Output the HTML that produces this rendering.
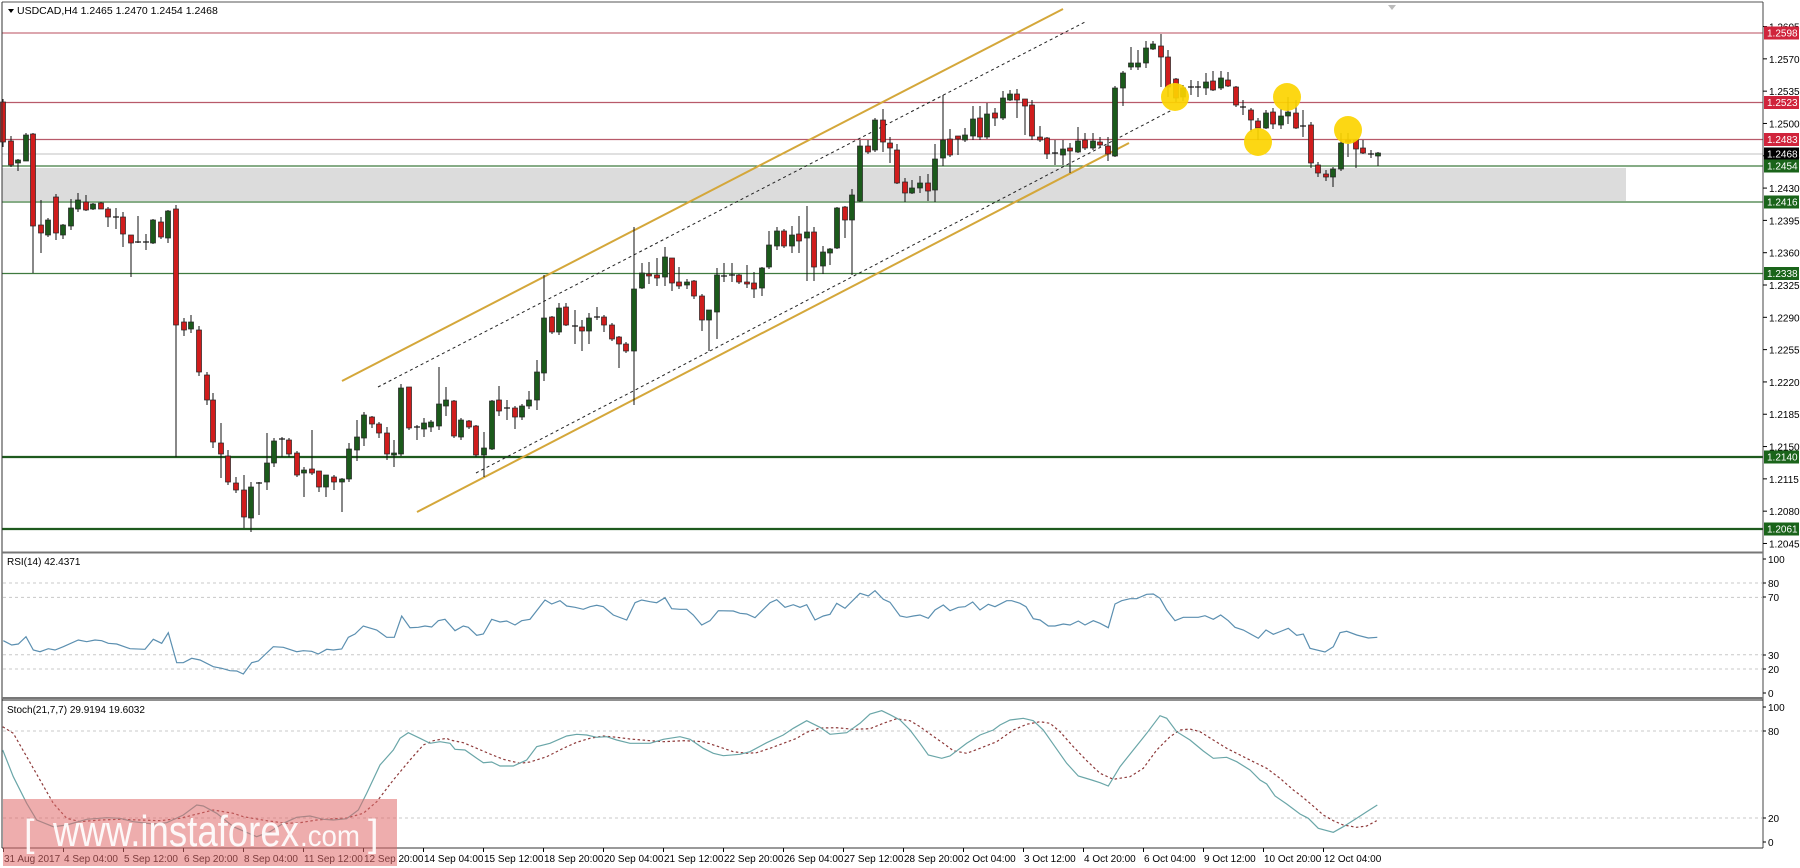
<!DOCTYPE html>
<html><head><meta charset="utf-8"><style>
html,body{margin:0;padding:0;background:#fff;width:1800px;height:868px;overflow:hidden}
svg{display:block}
text{font-family:"Liberation Sans",sans-serif;font-size:10px;fill:#000}
</style></head><body>
<svg id="s" width="1800" height="868" viewBox="0 0 1800 868" xmlns="http://www.w3.org/2000/svg"></svg>
<script>
var S=[];
function Y(p){return 33+(1.2598-p)*9231;}
S.push('<rect x="2" y="168" width="1624" height="33" fill="#dcdcdc"/>');
function hl(y,c,w){S.push('<line x1="2" x2="1763" y1="'+y+'" y2="'+y+'" stroke="'+c+'" stroke-width="'+w+'"/>');}
hl(33,'#c8707e',1.2);hl(102.5,'#b85a6a',1.2);hl(139.5,'#b85a6a',1.2);hl(154,'#c0c0c0',1);
hl(166,'#3f7a3f',1.2);hl(202,'#3f7a3f',1.2);hl(273.5,'#3f7a3f',1.2);hl(457,'#1e5a1e',2.2);hl(529,'#1e5a1e',2.2);
function ln(x1,y1,x2,y2,c,w,d){S.push('<line x1="'+x1+'" y1="'+y1+'" x2="'+x2+'" y2="'+y2+'" stroke="'+c+'" stroke-width="'+w+'"'+(d?' stroke-dasharray="'+d+'"':'')+'/>');}
ln(342,381,1063,9,'#d4a73a',2);
ln(417,512,1129,143,'#d4a73a',2);
ln(378,387,1085,22,'#222',1,'3,3');
ln(476,473,1172,110,'#222',1,'3,3');
var C=[[3,102,142,99,147,'r'],[11,141,165,136,167,'r'],[18,160,163,159,171,'g'],[26,135,161,133,161,'g'],[33,134,226,133,273,'r'],[41,225,233,200,253,'r'],[48,220,235,218,237,'g'],[56,197,233,194,240,'r'],[63,225,235,224,239,'g'],[71,208,226,199,230,'g'],[78,200,209,193,212,'g'],[86,202,210,195,211,'r'],[93,204,209,203,210,'g'],[101,203,209,202,209,'r'],[108,209,217,207,227,'r'],[116,217,217,208,229,'d'],[123,217,234,212,247,'r'],[131,235,243,235,277,'r'],[138,242,242,216,243,'d'],[146,242,242,234,250,'d'],[153,220,243,219,244,'g'],[161,222,237,217,239,'r'],[168,211,238,210,243,'g'],[176,209,325,205,457,'r'],
[184,322,330,318,336,'r'],[191,322,329,315,333,'g'],[199,330,372,326,376,'r'],[207,375,400,372,405,'r'],[213,400,442,393,448,'r'],[221,443,454,423,478,'r'],[228,456,482,450,485,'r'],[236,483,490,477,493,'r'],[244,490,517,475,528,'r'],[251,487,518,482,532,'g'],[259,483,483,482,515,'d'],[267,463,482,433,490,'g'],[274,441,463,438,467,'g'],[282,439,439,437,457,'d'],[289,440,454,438,457,'r'],[297,453,475,451,477,'r'],[304,470,473,467,497,'g'],[312,469,473,430,475,'r'],[319,471,487,471,492,'r'],[326,475,487,475,497,'g'],[334,477,482,475,490,'r'],[342,479,482,478,512,'g'],[349,449,479,443,482,'g'],[357,437,450,420,461,'g'],[364,415,438,412,446,'g'],[372,417,424,416,428,'r'],[379,424,433,422,438,'r'],[387,433,454,427,460,'r'],[394,453,455,440,467,'g'],[401,388,454,384,456,'g'],[409,387,428,387,430,'r'],[417,427,427,425,440,'d'],[424,423,429,418,437,'g'],[431,422,427,420,432,'g'],[439,404,426,367,430,'g'],[446,400,406,387,416,'g'],[454,401,436,400,438,'r'],[461,420,437,418,440,'g'],[469,421,427,420,429,'r'],[476,426,455,425,457,'r'],[484,448,455,432,477,'g'],[492,401,449,400,450,'g'],[499,400,411,386,416,'r'],[507,408,408,400,420,'d'],[515,408,417,406,429,'r'],[522,406,417,404,420,'g'],[529,400,406,391,409,'g'],[537,372,400,360,410,'g'],[544,318,373,275,381,'g'],[552,317,332,316,334,'r'],[559,308,332,303,335,'g'],[566,307,325,303,326,'r'],[575,326,326,310,344,'d'],[582,327,331,320,351,'r'],[589,318,331,313,344,'g'],[597,317,317,307,320,'d'],[604,317,325,315,332,'r'],[612,325,339,323,341,'r'],[619,337,344,336,368,'r'],[626,344,351,342,353,'r'],[634,289,351,227,405,'g'],[642,273,288,263,289,'g'],[649,274,276,262,284,'r'],[657,275,278,258,286,'r'],[665,257,277,247,286,'g'],[672,258,283,258,291,'r'],[679,282,286,267,289,'r'],[687,282,285,279,289,'g'],[694,281,296,280,299,'r'],[702,296,320,294,331,'r'],[709,310,320,310,351,'g'],[717,275,312,268,339,'g'],[724,276,276,263,282,'d'],[732,275,275,263,282,'d'],[739,275,282,274,284,'r'],[747,282,284,265,288,'r'],[754,283,289,272,298,'r'],[762,268,288,267,296,'g'],[769,245,267,231,269,'g'],[777,231,246,227,250,'g'],[784,231,246,229,248,'r'],[792,235,246,226,253,'g'],[799,234,241,216,253,'r'],[807,232,238,206,281,'g'],[814,232,267,227,281,'r'],[823,252,266,246,274,'g'],[830,249,253,248,265,'g'],[837,208,248,207,249,'g'],[845,207,220,206,238,'r'],[852,195,220,189,275,'g'],[860,146,201,140,202,'g'],[868,146,152,140,154,'r'],[875,120,150,118,152,'g'],[883,120,142,109,152,'r'],
[890,143,148,137,163,'r'],[897,150,183,144,184,'r'],[905,182,193,178,202,'r'],[912,188,193,180,194,'g'],[920,183,188,176,193,'g'],[928,183,191,174,201,'r'],[935,159,190,144,202,'g'],[943,140,158,95,166,'g'],[950,139,155,129,157,'r'],[958,136,139,136,155,'r'],[965,135,140,128,142,'g'],[973,119,136,106,140,'g'],[980,118,137,106,140,'r'],[987,114,137,103,139,'g'],[995,113,118,108,126,'r'],[1003,98,118,91,120,'g'],[1010,94,100,90,101,'g'],[1017,94,100,89,118,'r'],[1025,99,106,99,135,'r'],[1032,105,136,100,140,'r'],[1040,137,140,126,142,'r'],[1047,138,154,137,159,'r'],[1055,153,153,140,165,'d'],[1063,149,155,140,165,'g'],[1070,148,151,143,173,'r'],[1078,141,152,127,153,'g'],[1085,140,148,133,150,'r'],[1093,141,148,133,150,'g'],[1100,142,145,137,147,'r'],[1108,146,154,137,161,'r'],[1115,88,156,86,157,'g'],[1123,73,88,71,106,'g'],[1131,63,67,47,70,'g'],[1138,63,67,50,70,'g'],[1146,48,63,41,68,'g'],[1153,44,49,41,50,'g'],[1161,46,57,34,87,'r'],[1168,57,87,50,97,'r'],[1176,79,98,78,102,'r'],[1183,88,97,85,101,'g'],[1191,87,87,80,95,'d'],[1198,87,87,81,97,'d'],[1206,82,88,73,95,'g'],[1213,81,90,71,91,'r'],[1221,78,88,71,90,'g'],[1228,80,86,72,87,'r'],[1236,87,105,86,107,'r'],[1243,107,107,100,115,'d'],[1251,110,120,108,132,'r'],[1258,121,128,118,140,'r'],[1266,113,128,110,129,'g'],[1273,112,124,108,129,'r'],[1281,116,125,109,129,'g'],[1288,112,116,97,124,'g'],[1296,113,128,100,129,'r'],[1303,126,126,110,137,'d'],[1311,125,163,122,168,'r'],[1318,165,173,162,177,'r'],[1326,174,177,170,181,'r'],[1333,169,177,167,187,'g'],[1341,143,169,133,171,'g'],[1348,140,142,133,157,'r'],[1356,140,149,139,168,'r'],[1363,148,153,140,154,'r'],[1371,154,154,150,158,'d'],[1378,153,156,152,166,'g']];
C.forEach(function(c){
 var x=c[0];
 S.push('<line x1="'+x+'" x2="'+x+'" y1="'+c[3]+'" y2="'+c[4]+'" stroke="#111" stroke-width="1"/>');
 if(c[5]=='d'){S.push('<line x1="'+(x-3)+'" x2="'+(x+3)+'" y1="'+c[1]+'" y2="'+c[1]+'" stroke="#111" stroke-width="1.2"/>');}
 else{var h=Math.max(c[2]-c[1],2);S.push('<rect x="'+(x-2.5)+'" y="'+c[1]+'" width="5" height="'+h+'" fill="'+(c[5]=='r'?'#d01c1c':'#1b5a1b')+'" stroke="#222" stroke-width="0.7"/>');}
});
[[1175,97],[1287,97],[1258,142],[1348,130]].forEach(function(p){S.push('<circle cx="'+p[0]+'" cy="'+p[1]+'" r="14" fill="#fcd400" opacity="0.92"/>');});
S.push('<line x1="2" y1="2" x2="1763" y2="2" stroke="#555" stroke-width="1"/>');
S.push('<line x1="2" y1="2" x2="2" y2="848" stroke="#333" stroke-width="1"/>');
S.push('<line x1="1763" y1="2" x2="1763" y2="848" stroke="#444" stroke-width="1"/>');
S.push('<rect x="2" y="551.5" width="1761" height="2" fill="#777"/>');
S.push('<rect x="2" y="697" width="1761" height="2" fill="#777"/>');
S.push('<line x1="2" y1="700" x2="1763" y2="700" stroke="#222" stroke-width="1"/>');
S.push('<line x1="2" y1="848" x2="1763" y2="848" stroke="#333" stroke-width="1"/>');
S.push('<polygon points="1388,5 1396,5 1392,10" fill="#bbb"/>');
S.push('<polygon points="8,9 14,9 11,13" fill="#000"/>');
S.push('<text x="17" y="14" style="font-size:10.5px">USDCAD,H4  1.2465 1.2470 1.2454 1.2468</text>');
for(var i=0;i<17;i++){var p=1.2605-0.0035*i;var y=Y(p);S.push('<line x1="1763" x2="1767" y1="'+y+'" y2="'+y+'" stroke="#000"/>');S.push('<text x="1769" y="'+(y+4)+'">'+p.toFixed(4)+'</text>');}
function tag(y,t,bg){S.push('<rect x="1764" y="'+(y-6.5)+'" width="35" height="13" fill="'+bg+'"/><text x="1767" y="'+(y+3.5)+'" style="fill:#fff">'+t+'</text>');}
tag(33,'1.2598','#d0243c');tag(102.5,'1.2523','#d0243c');tag(139.5,'1.2483','#d0243c');tag(154,'1.2468','#000');tag(166,'1.2454','#1a641a');tag(202,'1.2416','#1a641a');tag(273.5,'1.2338','#1a641a');tag(457,'1.2140','#1a641a');tag(529,'1.2061','#1a641a');
function ry(v){return 697.7-v*1.433;}
[80,70,30,20].forEach(function(v){var y=ry(v);S.push('<line x1="3" x2="1762" y1="'+y+'" y2="'+y+'" stroke="#c8c8c8" stroke-dasharray="3,3"/>');});
[[100,559],[80,583],[70,597],[30,655],[20,669],[0,693]].forEach(function(a){S.push('<line x1="1763" x2="1766" y1="'+a[1]+'" y2="'+a[1]+'" stroke="#000"/><text x="1768" y="'+(a[1]+4)+'">'+a[0]+'</text>');});
S.push('<text x="7" y="565">RSI(14) 42.4371</text>');
function sy(v){return 847-v*1.45;}
[80,20].forEach(function(v){var y=sy(v);S.push('<line x1="3" x2="1762" y1="'+y+'" y2="'+y+'" stroke="#c8c8c8" stroke-dasharray="3,3"/>');});
[[100,707],[80,731],[20,818],[0,842]].forEach(function(a){S.push('<line x1="1763" x2="1766" y1="'+a[1]+'" y2="'+a[1]+'" stroke="#000"/><text x="1768" y="'+(a[1]+4)+'">'+a[0]+'</text>');});
S.push('<text x="7" y="713">Stoch(21,7,7) 29.9194 19.6032</text>');
function pts(arrs){var o=[];arrs.forEach(function(g){var ox=g[0],oy=g[1],lim=g[3]||1e9;g[2].forEach(function(p){if(p[0]<lim)o.push((ox+p[0]/3).toFixed(1)+','+(oy+p[1]/3).toFixed(1));});});return o.join(' ');}
var rsi=pts([[0,550,[[10,272],[35,285],[55,282],[78,260],[100,300],[120,305],[145,296],[165,300],[190,290],[235,270],[260,275],[285,270],[305,272],[325,280],[350,282],[390,296],[435,298],[460,268],[485,280],[505,248],[530,338],[550,338],[575,325],[600,330],[640,350],[665,355],[690,362],[710,363],[730,372],[755,338],[775,333],[820,290],[850,292],[890,305],[910,302],[935,304],[955,312],[980,298],[1000,300],[1025,297],[1045,262],[1065,252],[1090,228],[1130,240],[1160,262],[1183,262],[1205,198],[1230,233],[1255,232],[1275,228],[1295,231],[1315,212],[1335,208]]],
[450,550,[[0,225],[15,242],[40,228],[55,232],[80,256],[100,252],[125,208],[150,216],[170,213],[195,225],[215,212],[240,208],[285,150],[305,162],[330,152],[350,168],[375,172],[400,178],[420,170],[440,166],[460,170],[490,195],[530,210],[555,158],[575,150],[600,155],[620,158],[645,143],[665,176],[690,178],[710,178],[730,195],[755,225],[780,212],[805,182],[850,183],[870,190],[890,192],[915,203],[960,158],[980,149],[1005,172],[1030,164],[1050,172],[1070,164],[1095,210],[1120,198],[1140,193],[1160,160],[1185,175],[1230,130],[1255,138],[1275,122],[1300,148],[1320,157]]],
[900,550,[[0,198],[20,202],[40,198],[60,195],[85,205],[105,180],[130,165],[150,182],[175,172],[195,170],[218,156],[240,180],[265,163],[285,170],[320,152],[335,152],[360,160],[378,170],[400,206],[420,210],[445,228],[465,228],[490,222],[510,225],[535,213],[555,225],[580,212],[600,220],[625,233],[645,162],[665,152],[690,146],[710,146],[740,133],[760,132],[780,145],[800,180],[825,212],[850,202],[895,202],[915,197],[940,208],[962,195],[985,212],[1005,232],[1030,240],[1075,265],[1098,240],[1120,253],[1145,243],[1165,235],[1190,256]],1200],
[1300,560,[[10,222],[30,265],[75,276],[100,260],[120,218],[140,214],[170,225],[205,234],[232,232]]]]);
S.push('<polyline points="'+rsi+'" fill="none" stroke="#5b8fb0" stroke-width="1.2"/>');
var st=pts([[0,550,[[8,600],[40,680],[80,760],[110,810],[160,830],[200,825],[260,808],[320,803],[360,805],[400,815],[460,822],[500,818],[550,795],[590,765],[610,768],[650,790],[700,830],[770,860],[810,845],[850,820],[890,802],[930,798],[970,808],[1000,810],[1040,806],[1075,780],[1100,730],[1140,645],[1180,600],[1200,565],[1225,548],[1260,565],[1290,580],[1320,575]]],
[450,550,[[0,580],[15,598],[45,600],[80,625],[100,638],[125,636],[150,648],[190,648],[230,630],[260,590],[300,580],[350,558],[380,553],[410,555],[440,562],[470,560],[500,570],[540,580],[600,580],[640,568],[690,560],[720,568],[760,595],[790,610],[820,617],[870,613],[900,605],[950,578],[1000,555],[1030,535],[1070,512],[1110,532],[1140,553],[1190,548],[1230,520],[1260,492],[1295,482],[1320,494]]],
[900,550,[[0,510],[30,540],[60,580],[85,615],[125,625],[150,618],[200,580],[240,555],[280,540],[300,525],[330,510],[370,505],[400,512],[430,540],[465,590],[500,640],[535,678],[575,690],[600,698],[625,708],[660,650],[700,600],[740,550],[780,497],[800,505],[830,545],[870,570],[910,603],[940,625],[980,622],[1010,635],[1050,660],[1080,690],[1100,702],[1125,738],[1160,762]],1200],
[1300,560,[[0,762],[25,775],[55,805],[100,817],[130,800],[170,775],[200,755],[232,735]]]]);
var sg=pts([[0,550,[[8,530],[40,550],[80,620],[120,690],[160,760],[200,805],[240,815],[300,810],[360,808],[420,810],[480,812],[540,805],[600,790],[640,780],[700,790],[730,800],[800,812],[860,820],[900,818],[950,810],[1000,806],[1040,804],[1090,790],[1130,755],[1180,690],[1230,630],[1270,585],[1300,572],[1340,565]]],
[450,550,[[0,570],[40,578],[80,595],[120,612],[160,628],[210,640],[240,636],[290,620],[340,595],[380,577],[420,565],[460,558],[500,562],[540,567],[600,572],[640,575],[700,572],[760,575],[800,588],[850,605],[890,610],[920,608],[960,595],[1000,580],[1040,565],[1070,547],[1110,534],[1160,533],[1210,538],[1260,536],[1300,520],[1340,506]]],
[900,550,[[0,508],[30,512],[60,530],[90,552],[130,580],[160,602],[200,610],[240,595],[290,575],[340,540],[380,523],[420,515],[450,520],[480,545],[520,590],[560,632],[600,670],[640,688],[690,680],[730,655],[770,600],[810,560],[840,540],[870,537],[900,545],[940,570],[980,595],[1020,615],[1060,635],[1100,655],[1140,685],[1180,720]],1200],
[1300,560,[[0,705],[30,730],[70,765],[100,782],[130,795],[170,802],[200,798],[230,782]]]]);
S.push('<polyline points="'+sg+'" fill="none" stroke="#8e3a3a" stroke-width="1.2" stroke-dasharray="2.5,2.5"/>');
S.push('<polyline points="'+st+'" fill="none" stroke="#6aa6a8" stroke-width="1.2"/>');
var T=['31 Aug 2017','4 Sep 04:00','5 Sep 12:00','6 Sep 20:00','8 Sep 04:00','11 Sep 12:00','12 Sep 20:00','14 Sep 04:00','15 Sep 12:00','18 Sep 20:00','20 Sep 04:00','21 Sep 12:00','22 Sep 20:00','26 Sep 04:00','27 Sep 12:00','28 Sep 20:00','2 Oct 04:00','3 Oct 12:00','4 Oct 20:00','6 Oct 04:00','9 Oct 12:00','10 Oct 20:00','12 Oct 04:00'];
T.forEach(function(t,i){var x=3+60*i;S.push('<line x1="'+(x+0.5)+'" x2="'+(x+0.5)+'" y1="848" y2="852" stroke="#000"/><text x="'+(x+1)+'" y="862">'+t+'</text>');});
S.push('<rect x="3" y="799" width="394" height="67" fill="#e06a6a" opacity="0.55"/>');
S.push('<text x="24" y="846" style="font-size:38px;fill:#fff;opacity:0.92">[</text>');
S.push('<text x="53" y="846" textLength="246" lengthAdjust="spacingAndGlyphs" style="font-size:44px;fill:#fff;opacity:0.92">www.instaforex</text>');
S.push('<text x="300" y="846" textLength="60" lengthAdjust="spacingAndGlyphs" style="font-size:30px;fill:#fff;opacity:0.92">.com</text>');
S.push('<text x="368" y="846" style="font-size:38px;fill:#fff;opacity:0.92">]</text>');
document.getElementById('s').innerHTML=S.join('');
</script>
</body></html>
